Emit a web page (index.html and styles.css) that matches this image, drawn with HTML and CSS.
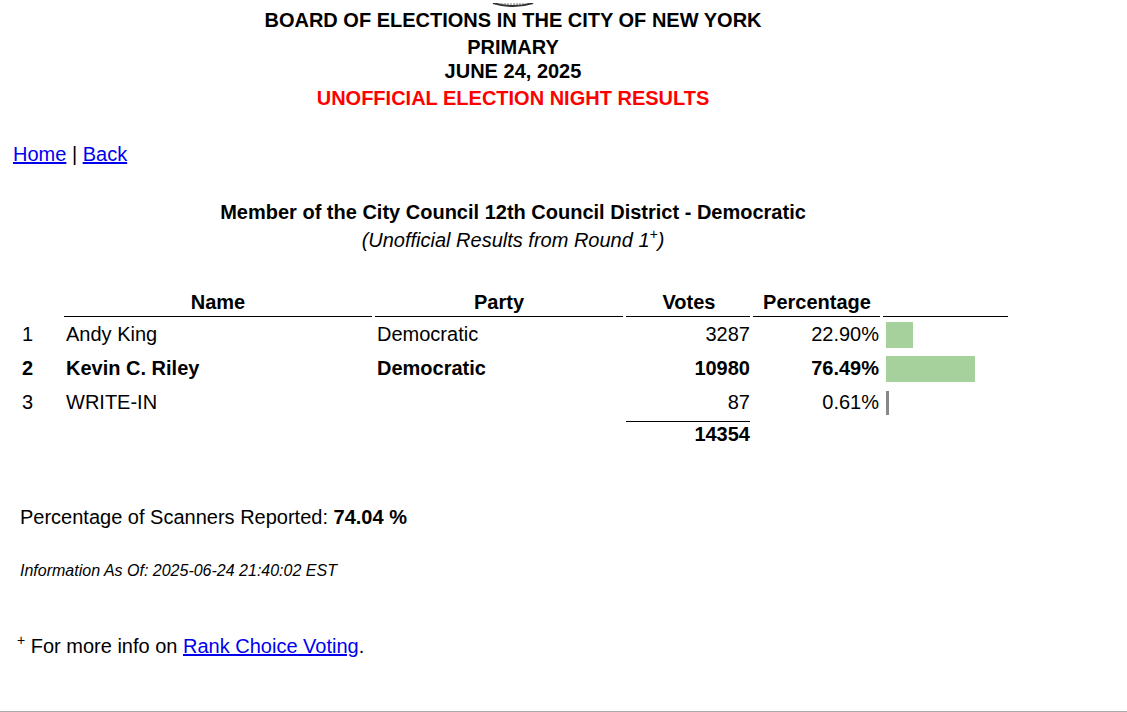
FILE: index.html
```html
<!DOCTYPE html>
<html lang="en">
<head>
<meta charset="utf-8">
<title>Board of Elections in the City of New York - Primary</title>
<link rel="stylesheet" href="styles.css">
</head>
<body>
<div class="page">
  <header class="masthead">
    <div class="seal">
      <svg width="44" height="4" viewBox="0 0 44 4" aria-hidden="true">
        <path d="M2 0 Q22 6 42 0" fill="none" stroke="#333" stroke-width="2"/>
        <path d="M10 1 L34 1" stroke="#777" stroke-width="1" stroke-dasharray="2 1"/>
      </svg>
    </div>
    <div class="org">BOARD OF ELECTIONS IN THE CITY OF NEW YORK</div>
    <div class="election">PRIMARY<br>JUNE 24, 2025</div>
    <div class="status">UNOFFICIAL ELECTION NIGHT RESULTS</div>
  </header>

  <nav class="nav"><a href="#">Home</a> | <a href="#">Back</a></nav>

  <section class="contest">
    <h1 class="contest-title">Member of the City Council 12th Council District - Democratic</h1>
    <div class="contest-sub">(Unofficial Results from Round 1<sup>+</sup>)</div>
  </section>

  <table class="results">
    <thead>
      <tr>
        <th class="c-rank"></th>
        <th class="c-name head">Name</th>
        <th class="c-party head">Party</th>
        <th class="c-votes head">Votes</th>
        <th class="c-pct head">Percentage</th>
        <th class="c-bar head"></th>
      </tr>
    </thead>
    <tbody>
      <tr>
        <td class="c-rank">1</td>
        <td class="c-name">Andy King</td>
        <td class="c-party">Democratic</td>
        <td class="c-votes">3287</td>
        <td class="c-pct">22.90%</td>
        <td class="c-bar"><span class="bar" style="width:27px"></span></td>
      </tr>
      <tr class="winner">
        <td class="c-rank">2</td>
        <td class="c-name">Kevin C. Riley</td>
        <td class="c-party">Democratic</td>
        <td class="c-votes">10980</td>
        <td class="c-pct">76.49%</td>
        <td class="c-bar"><span class="bar" style="width:89px"></span></td>
      </tr>
      <tr>
        <td class="c-rank">3</td>
        <td class="c-name">WRITE-IN</td>
        <td class="c-party"></td>
        <td class="c-votes">87</td>
        <td class="c-pct">0.61%</td>
        <td class="c-bar"><span class="bar bar-min" style="width:3px"></span></td>
      </tr>
      <tr class="total">
        <td class="c-rank"></td>
        <td class="c-name"></td>
        <td class="c-party"></td>
        <td class="c-votes sum">14354</td>
        <td class="c-pct"></td>
        <td class="c-bar"></td>
      </tr>
    </tbody>
  </table>

  <p class="scanners">Percentage of Scanners Reported: <b>74.04 %</b></p>
  <p class="asof">Information As Of: 2025-06-24 21:40:02 EST</p>
  <p class="footnote"><sup>+</sup> For more info on <a href="#">Rank Choice Voting</a>.</p>
</div>
<div class="page-end"></div>
</body>
</html>
```

FILE: styles.css
```css
html, body {
  margin: 0;
  padding: 0;
  background: #fff;
}

body {
  font-family: "Liberation Sans", Arial, sans-serif;
  font-size: 20px;
  color: #000;
}

a {
  color: #0000ee;
}

.page {
  height: 711px;
}

.masthead {
  width: 1026px;
  text-align: center;
  font-weight: bold;
  line-height: 24px;
}

.seal {
  height: 4px;
  line-height: 0;
  margin-bottom: 4px;
}

.org {
  margin-bottom: 3px;
}

.status {
  margin-top: 3px;
  color: #ff0000;
}

.nav {
  margin-top: 32px;
  padding-left: 13px;
  line-height: 24px;
}

.contest {
  width: 1026px;
  text-align: center;
  margin-top: 34px;
}

.contest-title {
  margin: 0;
  font-size: 20px;
  line-height: 24px;
  font-weight: bold;
}

.contest-sub {
  margin-top: 4px;
  font-style: italic;
  line-height: 24px;
}

.contest-sub sup {
  font-size: 14px;
  line-height: 0;
}

.results {
  margin: 36px 0 0 13px;
  border-collapse: separate;
  border-spacing: 3px 2px;
}

.results th,
.results td {
  padding: 0 2px;
  height: 32px;
  line-height: 24px;
  box-sizing: border-box;
  vertical-align: middle;
}

.results th {
  height: 27px;
  vertical-align: top;
  font-weight: bold;
}

.results th.head {
  border-bottom: 1px solid #000;
}

.results tbody td {
  padding-bottom: 2px;
}

.c-rank { width: 45px; text-align: left; padding-left: 6px !important; }
.c-name { width: 308px; text-align: left; }
.c-party { width: 248px; text-align: left; }
.c-votes { width: 124px; text-align: right; padding-right: 0 !important; }
.c-pct { width: 127px; text-align: right; padding-right: 1px !important; }
.c-bar { width: 125px; text-align: left; padding-left: 3px !important; padding-bottom: 0 !important; }

.results th.c-name,
.results th.c-party,
.results th.c-votes,
.results th.c-pct {
  text-align: center;
}

.winner td {
  font-weight: bold;
}

.bar {
  display: block;
  height: 26px;
  background: #a6d09c;
}

.bar-min {
  background: #888888;
  height: 24px;
}

.total td.sum {
  border-top: 1px solid #000;
  font-weight: bold;
  vertical-align: top;
  padding-top: 0;
  padding-bottom: 0;
}

.scanners {
  margin: 50px 0 0 20px;
  line-height: 24px;
}

.asof {
  margin: 32px 0 0 20px;
  font-size: 16px;
  font-style: italic;
  line-height: 20px;
}

.footnote {
  margin: 53px 0 0 17px;
  line-height: 24px;
}

.footnote sup {
  font-size: 14px;
  line-height: 0;
}

.page-end {
  border-top: 1px solid #aaaaaa;
}
```
